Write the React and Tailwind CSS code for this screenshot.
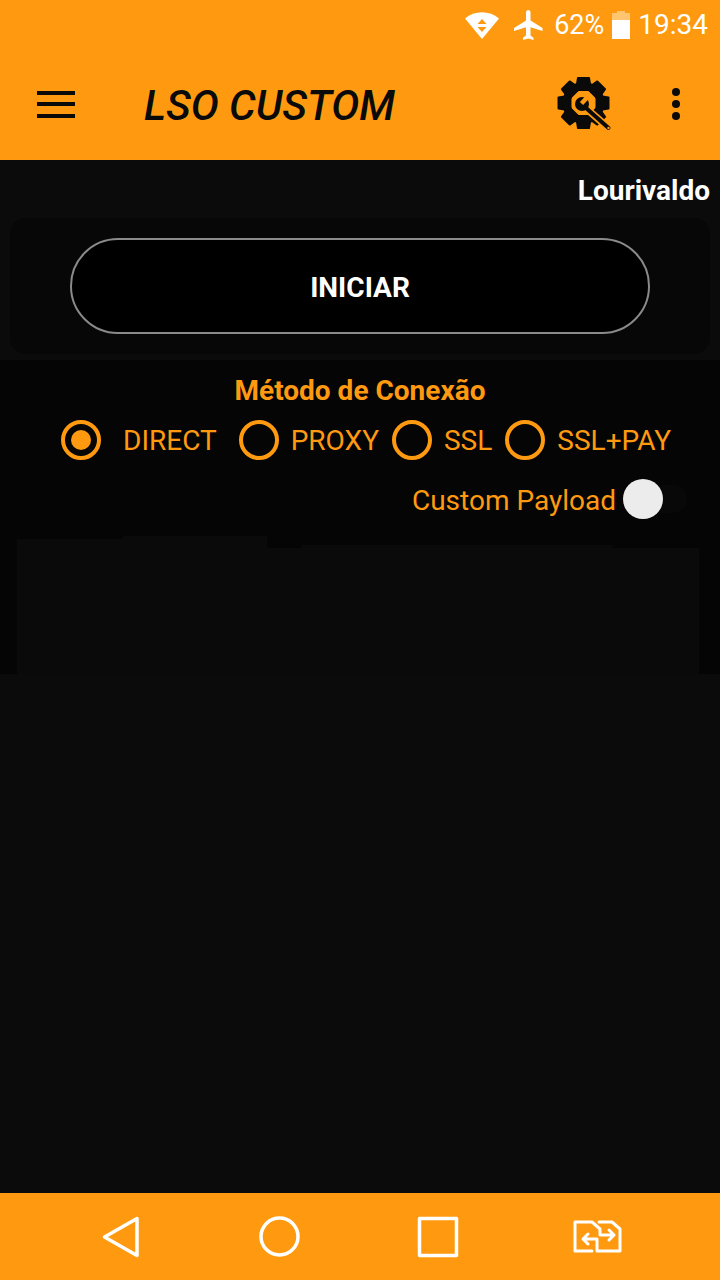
// Gear with a wrench across it, the settings button of the toolbar
function GearWrench() {
  const teeth = [0, 45, 90, 135, 180, 225, 270, 315];
  return (
    <svg width="66" height="66" viewBox="0 0 66 66" className="shrink-0">
      {teeth.map((deg) => (
        <path
          key={deg}
          d="M28 8 h11 l2 12 h-15 Z"
          fill="#0a0a0a"
          stroke="#0a0a0a"
          strokeWidth="2"
          strokeLinejoin="round"
          transform={`rotate(${deg} 33.5 33)`}
        />
      ))}
      <circle cx="33.5" cy="33" r="17" fill="none" stroke="#0a0a0a" strokeWidth="8" />
      <path d="M38 40 L58.5 58" stroke="#ff9a10" strokeWidth="7.5" strokeLinecap="round" />
      <path d="M36 38 L58.5 58" stroke="#0a0a0a" strokeWidth="4" strokeLinecap="round" />
      <circle cx="32" cy="34" r="7" fill="#0a0a0a" />
      <path d="M31.5 33.5 L39 25.5" stroke="#ff9a10" strokeWidth="4.5" />
      <circle cx="58.5" cy="58" r="1.2" fill="#ff9a10" />
    </svg>
  );
}

function Radio({ label, checked = false, gap = 'gap-3' }) {
  return (
    <div className={`flex items-center ${gap}`}>
      <span className="flex h-10 w-10 items-center justify-center rounded-full border-4 border-[#ff9a10]">
        {checked && <span className="h-5 w-5 rounded-full bg-[#ff9a10]" />}
      </span>
      <span className="pt-[2px] text-[28px] leading-[38px] text-[#ff9a10]">{label}</span>
    </div>
  );
}

export default function App() {
  return (
    <div className="flex h-[1280px] w-[720px] flex-col overflow-hidden bg-[#0b0b0b] font-['Roboto',sans-serif]">
      {/* Status bar */}
      <div className="flex h-12 items-center justify-end bg-[#ff9a10] pr-3 pt-[2px] text-white">
        <svg width="34" height="28" viewBox="0 0 34 28" className="mr-[12px]">
          <path d="M0 7.5 C9.5 -1 24.5 -1 34 7.5 L17 28 Z" fill="#fff" />
          <path d="M17 8 l4.5 5 h-9 Z M17 21 l4.5 -5 h-9 Z" fill="#ff9a10" />
        </svg>
        <svg width="36" height="36" viewBox="0 0 24 24" fill="#fff" className="mr-[7px]">
          <path d="M21 16v-2l-8-5V3.5c0-.83-.67-1.5-1.5-1.5S10 2.67 10 3.5V9l-8 5v2l8-2.5V19l-2 1.5V22l3.5-1 3.5 1v-1.5L13 19v-5.5l8 2.5z" />
        </svg>
        <span className="mr-[8px] text-[27px] leading-none">62%</span>
        <div className="mr-[8px] flex h-7 w-[18px] flex-col items-center">
          <span className="h-[2px] w-2 bg-[#ffc56f]" />
          <span className="h-[7px] w-full bg-[#ffc56f]" />
          <span className="w-full flex-1 bg-white" />
        </div>
        <span className="text-[28px] leading-none">19:34</span>
      </div>

      {/* Toolbar */}
      <div className="flex h-28 items-center bg-[#ff9a10] pl-[37px]">
        <div className="flex w-[38px] flex-col gap-[7.5px]">
          <span className="h-1 bg-[#0a0a0a]" />
          <span className="h-1 bg-[#0a0a0a]" />
          <span className="h-1 bg-[#0a0a0a]" />
        </div>
        <h1 className="ml-[69px] pt-1 text-[42px] font-medium italic leading-none text-[#0a0a0a]">LSO CUSTOM</h1>
        <div className="ml-[155px] -mt-[2px]">
          <GearWrench />
        </div>
        <div className="ml-[56px] flex flex-col gap-1">
          <span className="h-2 w-2 rounded-full bg-[#0a0a0a]" />
          <span className="h-2 w-2 rounded-full bg-[#0a0a0a]" />
          <span className="h-2 w-2 rounded-full bg-[#0a0a0a]" />
        </div>
      </div>

      {/* Body */}
      <div className="flex-1">
        <div className="flex h-[58px] items-center justify-end pr-[10px] pt-1 text-[28px] font-bold text-white">Lourivaldo</div>
        <div className="mx-[10px] flex h-[136px] items-start justify-center rounded-2xl bg-[#070707] pt-5">
          <button className="h-[96px] w-[580px] rounded-full border-2 border-[#8a8a8a] bg-black pt-1 text-[28px] font-bold text-white">
            INICIAR
          </button>
        </div>

        {/* Connection method */}
        <div className="mt-[6px] flex h-[314px] flex-col bg-[#050505]">
          <div className="flex h-[60px] items-center justify-center pt-[2px] text-[28px] font-bold text-[#ff9a10]">Método de Conexão</div>
          <div className="flex h-10 pl-[61px]">
            <Radio label="DIRECT" checked gap="gap-[22px]" />
            <div className="ml-[22px]"><Radio label="PROXY" /></div>
            <div className="ml-[13px]"><Radio label="SSL" /></div>
            <div className="ml-[13px]"><Radio label="SSL+PAY" /></div>
          </div>
          <div className="mt-[19px] flex h-10 items-center justify-end pr-[33px]">
            <span className="mr-[7px] pt-1 text-[28px] text-[#ff9a10]">Custom Payload</span>
            <div className="flex h-7 w-[64px] items-center rounded-full bg-[#080808]">
              <span className="h-10 w-10 rounded-full bg-[#ececec]" />
            </div>
          </div>
          {/* Stepped panel left over from the payload box */}
          <div className="mt-auto flex items-end pl-[17px] pr-[21px]">
            <div className="h-[135px] w-[106px] bg-[#0a0a0a]" />
            <div className="h-[138px] w-[144px] bg-[#0a0a0a]" />
            <div className="h-[126px] w-[35px] bg-[#0a0a0a]" />
            <div className="h-[129px] w-[310px] bg-[#0a0a0a]" />
            <div className="h-[126px] flex-1 bg-[#0a0a0a]" />
          </div>
        </div>
      </div>

      {/* Navigation bar */}
      <div className="flex h-[87px] items-center bg-[#ff9a10] text-white">
        <svg width="720" height="87" viewBox="0 0 720 87" fill="none" stroke="#fff" strokeWidth="3.5" strokeLinejoin="round" strokeLinecap="round">
          <path d="M137 25.5 L104.5 44 L137 62.5 Z" />
          <circle cx="279.5" cy="43.5" r="18.5" />
          <rect x="419.5" y="25.5" width="37" height="37" />
          <path d="M592 58 H575 V29 H592 L600 36 V42 H614 M609 37 L614 42 L609 47" strokeWidth="3" />
          <path d="M599 29 H612 L620 36 V58 H597 V46 H583 M588 41 L583 46 L588 51" strokeWidth="3" />
        </svg>
      </div>
    </div>
  );
}
